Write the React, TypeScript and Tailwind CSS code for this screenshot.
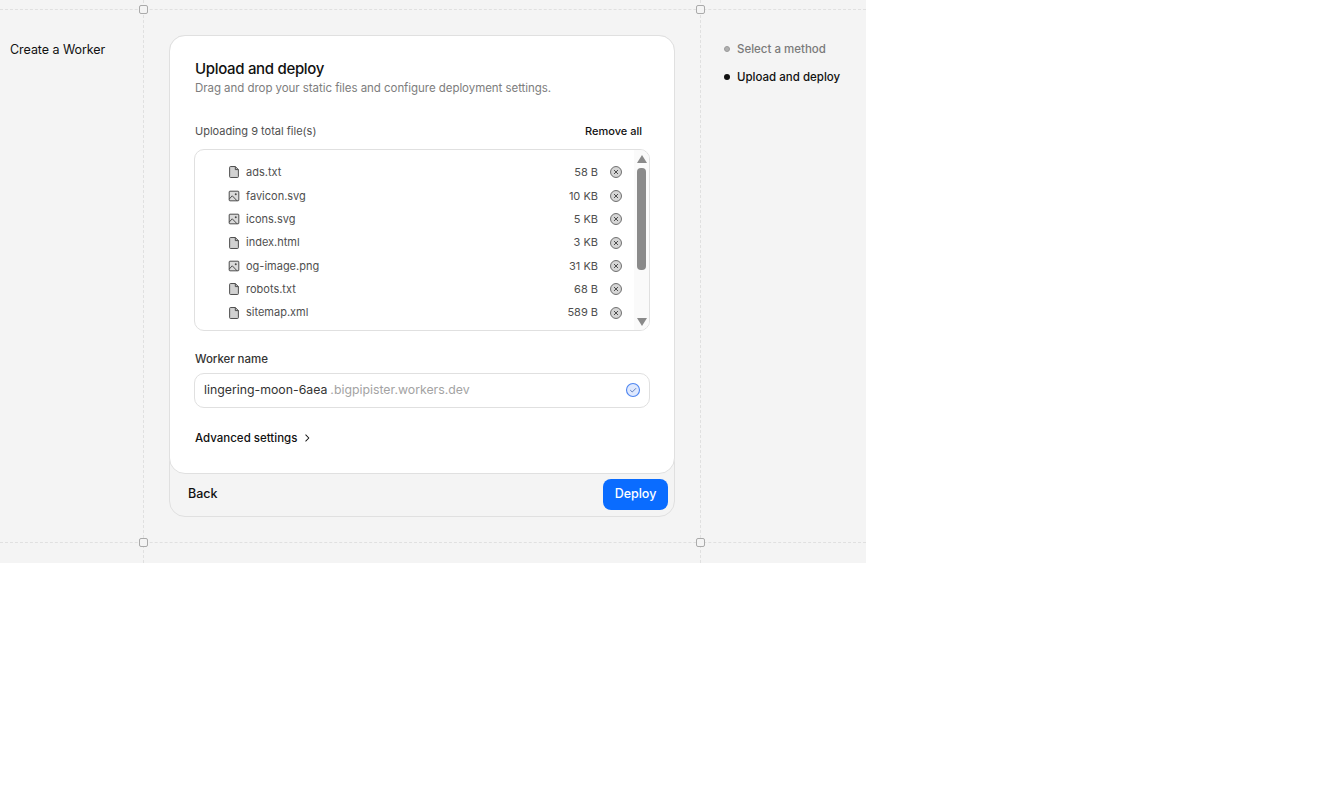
import { PiCaretRightBold } from 'react-icons/pi';

const files = [
  { name: 'ads.txt', size: '58 B', image: false },
  { name: 'favicon.svg', size: '10 KB', image: true },
  { name: 'icons.svg', size: '5 KB', image: true },
  { name: 'index.html', size: '3 KB', image: false },
  { name: 'og-image.png', size: '31 KB', image: true },
  { name: 'robots.txt', size: '68 B', image: false },
  { name: 'sitemap.xml', size: '589 B', image: false },
];

function Handle({ className }: { className: string }) {
  return <div className={`absolute w-[9px] h-[9px] rounded-[2px] border border-[#aaaaaa] bg-[#f4f4f4] ${className}`} />;
}

function FileIcon() {
  return (
    <svg viewBox="0 0 256 256" className="w-[14px] h-[14px] shrink-0">
      <path d="M152 28H64a16 16 0 0 0-16 16v168a16 16 0 0 0 16 16h128a16 16 0 0 0 16-16V84Z" fill="#d2d2d2" stroke="#4a4a4a" strokeWidth="18" strokeLinejoin="round" />
      <path d="M152 28v56h56" fill="none" stroke="#4a4a4a" strokeWidth="18" strokeLinejoin="round" />
    </svg>
  );
}

function ImageIcon() {
  return (
    <svg viewBox="0 0 256 256" className="w-[14px] h-[14px] shrink-0">
      <rect x="40" y="40" width="176" height="176" rx="14" fill="#dadada" stroke="#4a4a4a" strokeWidth="18" />
      <path d="M40 184l56-60 88 92" fill="none" stroke="#4a4a4a" strokeWidth="18" strokeLinejoin="round" />
      <circle cx="160" cy="96" r="18" fill="#4a4a4a" />
    </svg>
  );
}

function RemoveIcon() {
  return (
    <svg viewBox="0 0 256 256" className="ml-[11px] w-[14px] h-[14px] shrink-0">
      <circle cx="128" cy="128" r="100" fill="#d6d6d6" stroke="#5a5a5a" strokeWidth="16" />
      <path d="M96 96l64 64M160 96l-64 64" stroke="#4a4a4a" strokeWidth="18" strokeLinecap="round" />
    </svg>
  );
}

function CheckIcon() {
  return (
    <svg viewBox="0 0 256 256" className="mb-[2px] w-[16px] h-[16px] shrink-0">
      <circle cx="128" cy="128" r="104" fill="#dfe9fe" stroke="#4f86f0" strokeWidth="18" />
      <path d="M88 134l28 26 56-56" fill="none" stroke="#4f6fb0" strokeWidth="14" strokeLinecap="round" strokeLinejoin="round" />
    </svg>
  );
}

export default function App() {
  return (
    <div className="relative flex w-[866px] h-[563px] bg-[#f4f4f4] font-['Inter',sans-serif] text-[#111] overflow-hidden">
      {/* guide lines */}
      <div className="absolute left-0 right-0 top-[9px] border-t border-dashed border-[#e0e0e0]" />
      <div className="absolute left-0 right-0 top-[542px] border-t border-dashed border-[#e0e0e0]" />
      <div className="absolute top-0 bottom-0 left-[143px] border-l border-dashed border-[#e0e0e0]" />
      <div className="absolute top-0 bottom-0 left-[700px] border-l border-dashed border-[#e0e0e0]" />
      <Handle className="left-[139px] top-[5px]" />
      <Handle className="left-[696px] top-[5px]" />
      <Handle className="left-[139px] top-[538px]" />
      <Handle className="left-[696px] top-[538px]" />

      <div className="w-[143px] shrink-0 pl-[10px] pt-[41px] text-[12.5px] tracking-[-0.05px] leading-[17px]">Create a Worker</div>

      <div className="relative w-[558px] shrink-0 pl-[26px] pr-[26px] pt-[35px]">
        <div className="rounded-[16px] border border-[#e0e0e0] bg-[#f4f4f4]">
          <div className="h-[439px] -m-px rounded-[16px] border border-[#e0e0e0] bg-white px-[24px] pt-[23px]">
            <h1 className="pl-px text-[15px] tracking-[-0.32px] leading-[20px] font-[450]">Upload and deploy</h1>
            <p className="mt-[1px] pl-px text-[11.5px] tracking-[-0.05px] leading-[16px] text-[#7d7d7d]">Drag and drop your static files and configure deployment settings.</p>

            <div className="mt-[27px] flex justify-between pl-px pr-[8px] text-[11px] leading-[16px]">
              <span className="text-[#4f4f4f]">Uploading 9 total file(s)</span>
              <span className="font-[450]">Remove all</span>
            </div>

            <div className="mt-[10px] flex h-[182px] rounded-[10px] border border-[#e0e0e0] overflow-hidden">
              <div className="flex-1 pl-[32px] pr-[11px] pt-[10.7px]">
                {files.map((f) => (
                  <div key={f.name} className="flex h-[23.4px] items-center text-[11px] text-[#4f4f4f]">
                    {f.image ? <ImageIcon /> : <FileIcon />}
                    <span className="ml-[5px] flex-1">{f.name}</span>
                    <span>{f.size}</span>
                    <RemoveIcon />
                  </div>
                ))}
              </div>
              {/* scrollbar */}
              <div className="flex w-[15px] shrink-0 flex-col items-center bg-[#fafafa] pt-[5px]">
                <div className="w-0 h-0 border-x-[5px] border-x-transparent border-b-[8px] border-b-[#8a8a8a]" />
                <div className="mt-[5px] h-[102px] w-[9px] rounded-[4px] bg-[#8a8a8a]" />
                <div className="mt-[48px] w-0 h-0 border-x-[5px] border-x-transparent border-t-[8px] border-t-[#8a8a8a]" />
              </div>
            </div>

            <div className="mt-[20px] pl-px text-[11.5px] tracking-[-0.05px] leading-[16px] font-[450] text-[#333]">Worker name</div>
            <div className="mt-[6px] flex h-[35px] items-center rounded-[10px] border border-[#e0e0e0] pl-[9px] pr-[8px] text-[12.3px]">
              <span className="text-[#333]">lingering-moon-6aea</span>
              <span className="ml-[3px] flex-1 text-[#a3a3a3]">.bigpipister.workers.dev</span>
              <CheckIcon />
            </div>

            <div className="mt-[22px] flex items-center pl-px text-[11.5px] leading-[16px] font-[450]">
              Advanced settings
              <PiCaretRightBold className="ml-[5px] w-[10px] h-[10px]" />
            </div>
          </div>
          <div className="flex h-[43px] items-center justify-between pl-[18px] pr-[6px] text-[12.5px] font-medium">
            <span>Back</span>
            <span className="flex h-[31px] w-[65px] items-center justify-center rounded-[8px] bg-[#0a6cff] text-white">Deploy</span>
          </div>
        </div>
      </div>

      <div className="pl-[23px] pt-[41px] text-[11.5px] leading-[16px] font-[450]">
        <div className="flex items-center text-[#7a7a7a]">
          <span className="w-[6px] h-[6px] rounded-full bg-[#b0b0b0] border border-[#9a9a9a]" />
          <span className="ml-[7px]">Select a method</span>
        </div>
        <div className="mt-[12px] flex items-center text-[#111]">
          <span className="w-[6px] h-[6px] rounded-full bg-[#111]" />
          <span className="ml-[7px]">Upload and deploy</span>
        </div>
      </div>
    </div>
  );
}
